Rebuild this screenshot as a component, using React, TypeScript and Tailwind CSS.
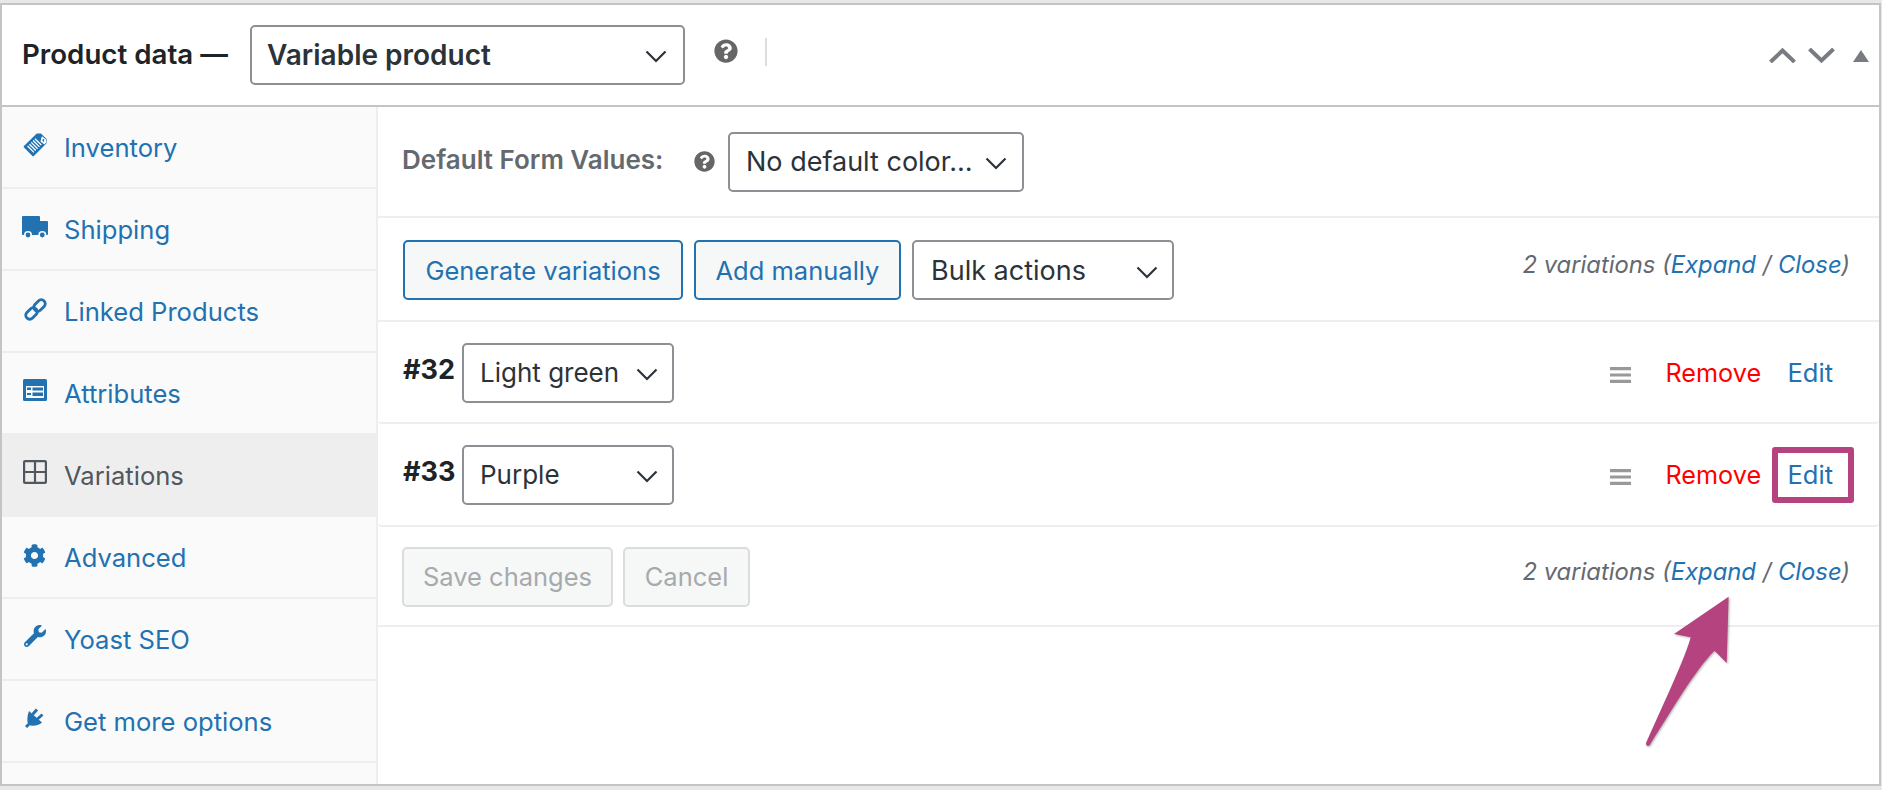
import React from "react";
import { FaCog, FaWrench, FaQuestionCircle } from "react-icons/fa";

const font = "font-['Inter','Liberation_Sans',sans-serif]";

function Chevron() {
  return (
    <svg viewBox="0 0 22 13" className="w-[22px] h-[13px] shrink-0 mt-[3px]" fill="none" stroke="#2c3338" strokeWidth="2.2">
      <path d="M1.5 1.5 L11 11 L20.5 1.5" />
    </svg>
  );
}

function Select({ label, className = "", text = "text-[26px] leading-[32px] text-[#2c3338]", pl = "pl-[17px]", pr = "pr-[15px]" }: { label: string; className?: string; text?: string; pl?: string; pr?: string }) {
  return (
    <div className={"flex items-center justify-between h-[60px] bg-white border-2 border-[#8c8f94] rounded-[5px] " + pl + " " + pr + " " + className}>
      <span className={text + " whitespace-nowrap"}>{label}</span>
      <Chevron />
    </div>
  );
}

function Inventory() {
  return (
    <svg viewBox="0 0 26 26" className="w-[26px] h-[26px] ml-[1px]">
      <g transform="rotate(45 13 13)">
        <path d="M6 5 l3 -3 h8 l3 3 v18 a1 1 0 0 1 -1 1 h-12 a1 1 0 0 1 -1 -1z" fill="#2271b1" />
        <path d="M8.5 10 h9 M8.5 12.6 h9 M8.5 15.2 h9 M8.5 17.8 h9 M8.5 20.4 h9" stroke="#fff" strokeWidth="1.3" />
        <path d="M12 3 h5 l2 2 v3 h-5 z" fill="#fff" transform="rotate(-8 15 5)" />
        <path d="M15 3.5 l2.5 2.5 h-3z" fill="#2271b1" />
      </g>
    </svg>
  );
}

function Truck() {
  return (
    <svg viewBox="0 0 26 23" className="w-[26px] h-[23px]">
      <path d="M0 1 a1 1 0 0 1 1 -1 h16 a1 1 0 0 1 1 1 V5 h7 a1 1 0 0 1 1 1 V18 a1 1 0 0 1 -1 1 H1 a1 1 0 0 1 -1 -1z" fill="#2271b1" />
      <circle cx="6" cy="19" r="3.2" fill="#2271b1" stroke="#fafafa" strokeWidth="1.6" />
      <circle cx="20.3" cy="19" r="3.2" fill="#2271b1" stroke="#fafafa" strokeWidth="1.6" />
    </svg>
  );
}

function LinkIcon() {
  return (
    <svg viewBox="0 0 23 23" className="w-[23px] h-[23px] ml-[2px]" fill="none" stroke="#2271b1" strokeWidth="2.8">
      <rect x="9" y="3.5" width="13" height="8" rx="4" transform="rotate(-45 15.5 7.5)" />
      <rect x="1" y="11.5" width="13" height="8" rx="4" transform="rotate(-45 7.5 15.5)" />
    </svg>
  );
}

function Attributes() {
  return (
    <svg viewBox="0 0 24 22" className="w-[24px] h-[22px] ml-[1px]">
      <rect x="0" y="0" width="24" height="22" rx="1.5" fill="#2271b1" />
      <rect x="3" y="7" width="18" height="12" fill="#fafafa" />
      <path d="M4 8.5 h4 v2.5 h-4z M9.5 8.5 h10.5 v3 h-10.5z M4 14 h4 v2 h-4z M9.5 13.5 h10.5 v3.5 h-10.5z" fill="#2271b1" />
    </svg>
  );
}

function Grid() {
  return (
    <svg viewBox="0 0 24 24" className="w-[24px] h-[24px] ml-[1px]" fill="none" stroke="#50575e" strokeWidth="2.2">
      <rect x="1.1" y="1.1" width="21.8" height="21.8" rx="1" />
      <path d="M12 1 V23 M1 12 H23" />
    </svg>
  );
}

function PlugIcon() {
  return (
    <svg viewBox="0 0 20 20" className="w-[20px] h-[20px] ml-[3px]">
      <path d="M4 3 L17 14.5 C13 18 7.5 18.5 3 17 C2 12.5 2 8 4 3Z" fill="#2271b1" />
      <path d="M7.5 6.5 L12 1.5 M12.5 11 L17.5 6.5 M3.5 16.5 L1 19" stroke="#2271b1" strokeWidth="3" fill="none" />
    </svg>
  );
}

const tabs: { label: string; icon: React.ReactNode; active?: boolean; top: string }[] = [
  { label: "Inventory", icon: <Inventory />, top: "-mt-[7px]" },
  { label: "Shipping", icon: <Truck />, top: "-mt-[4px]" },
  { label: "Linked Products", icon: <LinkIcon />, top: "-mt-[3px]" },
  { label: "Attributes", icon: <Attributes />, top: "-mt-[6px]" },
  { label: "Variations", icon: <Grid />, active: true, top: "-mt-[7px]" },
  { label: "Advanced", icon: <FaCog className="w-[23px] h-[23px] text-[#2271b1] ml-[1px]" />, top: "-mt-[4px]" },
  { label: "Yoast SEO", icon: <FaWrench className="w-[22px] h-[22px] text-[#2271b1] ml-[2px]" />, top: "-mt-[6px]" },
  { label: "Get more options", icon: <PlugIcon />, top: "-mt-[6px]" },
];

function Counter() {
  return (
    <div className="italic text-[23.8px] leading-[30px] text-[#646970] whitespace-nowrap">
      2 variations (<span className="text-[#2271b1]">Expand</span> / <span className="text-[#2271b1]">Close</span>)
    </div>
  );
}

function Row({ id, label, rowClass }: { id: string; label: string; rowClass: string }) {
  return (
    <div className={"flex items-center border-b-2 border-[#eeeeee] pl-[25px] pr-[46px] rounded-b-[4px] " + rowClass}>
      <span className="font-bold text-[27px] leading-[30px] text-[#1d2327] w-[59px] -mt-[6px]">{id}</span>
      <Select label={label} className="w-[212px]" pl="pl-[16px]" pr="pr-[14px]" />
      <div className="flex-1" />
      <svg viewBox="0 0 21 16" className="w-[21px] h-[16px] mr-[35px] mt-[5px]">
        <path d="M0 0 h21 v3.2 H0z M0 6.4 h21 v3.2 H0z M0 12.8 h21 V16 H0z" fill="#999999" />
      </svg>
      <span className="text-[25.2px] leading-[30px] text-[#ff0000] w-[122px] mt-[1px]">Remove</span>
      <span className="text-[25.5px] leading-[30px] text-[#2271b1] mt-[1px]">Edit</span>
    </div>
  );
}

export default function App() {
  return (
    <div className={"relative h-[790px] w-[1882px] bg-[#e8e8e9] pt-[3px] overflow-hidden " + font}>
      <div className="flex flex-col h-[783px] w-[1881px] bg-white border-2 border-[#c3c4c7]">
        {/* header */}
        <div className="flex items-center h-[102px] shrink-0 border-b-2 border-[#c3c4c7] pl-[20px] pr-[10px]">
          <span className="font-semibold text-[27.7px] leading-[32px] text-[#1d2327] w-[228px] -mt-[2px] whitespace-nowrap">Product data —</span>
          <Select label="Variable product" className="w-[435px]" pl="pl-[15px]" pr="pr-[16px]" text="text-[28px] leading-[32px] font-semibold text-[#2c3338]" />
          <FaQuestionCircle className="w-[24px] h-[24px] text-[#666666] ml-[29px] -mt-[8px]" />
          <div className="w-[2px] h-[28px] bg-[#dddddd] ml-[27px] -mt-[6px]" />
          <div className="flex-1" />
          <svg viewBox="0 0 27 15" className="w-[27px] h-[15px] mt-[1px]" fill="none" stroke="#787c82" strokeWidth="4">
            <path d="M1.5 14 L13.5 2.5 L25.5 14" />
          </svg>
          <svg viewBox="0 0 27 15" className="w-[27px] h-[15px] ml-[12px] mt-[1px]" fill="none" stroke="#787c82" strokeWidth="4">
            <path d="M1.5 1 L13.5 12.5 L25.5 1" />
          </svg>
          <svg viewBox="0 0 16 12" className="w-[16px] h-[12px] ml-[18px] mt-[1px]">
            <path d="M8 0 L16 12 H0z" fill="#787c82" />
          </svg>
        </div>
        <div className="flex flex-1 min-h-0">
          {/* sidebar */}
          <div className="w-[376px] shrink-0 bg-[#fafafa] border-r-2 border-[#eeeeee] flex flex-col">
            {tabs.map((t) => (
              <div key={t.label} className={"flex items-center h-[82px] shrink-0 pl-[20px] border-b-2 " + (t.active ? "bg-[#eeeeee] border-[#eeeeee] text-[#50575e]" : "border-[#eeeeee] text-[#2271b1]")}>
                <span className={"w-[42px] flex justify-start " + t.top}>{t.icon}</span>
                <span className="text-[25.6px] leading-[30px] whitespace-nowrap mt-[1px]">{t.label}</span>
              </div>
            ))}
          </div>
          {/* main */}
          <div className="flex-1 flex flex-col">
            <div className="flex items-center h-[111px] border-b-2 border-[#eeeeee] pl-[24px]">
              <span className="font-semibold text-[26px] leading-[30px] text-[#646970] w-[292px] whitespace-nowrap -mt-[4px]">Default Form Values:</span>
              <FaQuestionCircle className="w-[21px] h-[21px] text-[#666666]" />
              <Select label="No default color…" className="w-[296px] ml-[13px]" text="text-[27px] leading-[32px] text-[#2c3338]" pl="pl-[16px]" />
            </div>
            <div className="flex items-center h-[104px] pt-[2px] border-b-2 border-[#eeeeee] pl-[25px] pr-[29px]">
              <div className="flex items-center justify-center pt-[2px] w-[280px] h-[60px] rounded-[5px] border-2 border-[#2271b1] bg-[#f6f7f7] text-[#2271b1] text-[25.5px] leading-[30px]">Generate variations</div>
              <div className="flex items-center justify-center pt-[2px] w-[207px] h-[60px] ml-[11px] rounded-[5px] border-2 border-[#2271b1] bg-[#f6f7f7] text-[#2271b1] text-[25.5px] leading-[30px]">Add manually</div>
              <Select label="Bulk actions" className="w-[262px] ml-[11px] pt-[2px]" text="text-[27px] leading-[32px] text-[#2c3338]" pr="pr-[14px]" />
              <div className="flex-1" />
              <div className="-mt-[11px]"><Counter /></div>
            </div>
            <Row id="#32" label="Light green" rowClass="h-[102px] pt-[1px]" />
            <Row id="#33" label="Purple" rowClass="h-[103px]" />
            <div className="flex items-center h-[100px] pt-[2px] border-b-2 border-[#eeeeee] pl-[24px] pr-[29px]">
              <div className="flex items-center justify-center w-[211px] h-[60px] rounded-[5px] border-2 border-[#dcdcde] bg-[#f6f7f7] text-[#a7aaad] text-[25.5px] leading-[30px]">Save changes</div>
              <div className="flex items-center justify-center w-[127px] h-[60px] ml-[10px] rounded-[5px] border-2 border-[#dcdcde] bg-[#f6f7f7] text-[#a7aaad] text-[25.5px] leading-[30px]">Cancel</div>
              <div className="flex-1" />
              <div className="-mt-[11px]"><Counter /></div>
            </div>
          </div>
        </div>
      </div>
      {/* annotations */}
      <div className="absolute left-[1772px] top-[447px] w-[82px] h-[56px] border-[6px] border-[#b4437f] rounded-[3px]" />
      <svg className="absolute left-0 top-0 pointer-events-none drop-shadow-[1px_1px_1px_rgba(0,0,0,0.3)]" width="1882" height="790" viewBox="0 0 1882 790">
        <path d="M1728.6 596.7 L1674 634 L1690.7 637.3 C1686 655 1670 690 1646 743 Q1646 747 1649.4 745.5 C1672 710 1695 670 1714.5 650.7 L1726.7 663 Z" fill="#b4437f" />
      </svg>
    </div>
  );
}
